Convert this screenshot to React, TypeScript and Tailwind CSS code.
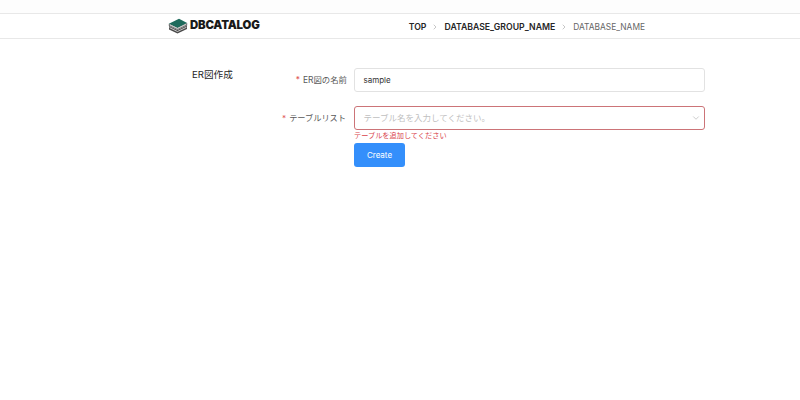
import { ChevronDown, ChevronRight } from "lucide-react";

const font = { fontFamily: '"Inter", "Noto Sans CJK JP", sans-serif' };

function Logo() {
  return (
    <div className="flex items-center gap-[2px]">
      <svg width="20" height="16" viewBox="0 0 20 16">
        <path d="M1 8 L1 11.5 L9.5 15.5 L19 11 L19 7.5 L9.5 12 Z" fill="#4a4a4a" />
        <path d="M1.5 9.6 L9.5 13.5 L18.5 9.2" stroke="#e4e4e4" strokeWidth="0.8" fill="none" />
        <path d="M0.8 5.8 L11 0.8 L19.2 5 L9.5 10 Z" fill="#1f6b5c" />
        <path d="M0.8 5.8 L9.5 10 L19.2 5 L19.2 7.4 L9.5 12 L0.8 8 Z" fill="#6f6f6f" />
        <path d="M2 7 L9.5 10.6 L18.2 6.3" stroke="#efefef" strokeWidth="0.8" fill="none" />
      </svg>
      <span className="text-[11.4px] font-black leading-none tracking-[-0.2px] text-[#1a1a1a]">DBCATALOG</span>
    </div>
  );
}

export default function App() {
  return (
    <div className="h-[400px] w-[800px] overflow-hidden bg-white" style={font}>
      <div className="h-[13px] bg-[#fdfdfd]" />
      <header className="flex h-[26px] items-center border-y border-[#e8e8e8] pl-[168px] pr-[155px]">
        <Logo />
        <nav className="ml-auto mt-[1px] flex items-center text-[8.7px] leading-[12px] text-[#262626]">
          <span className="font-semibold">TOP</span>
          <ChevronRight className="mx-[5px] size-[8px] text-[#aaa]" />
          <span className="font-semibold">DATABASE_GROUP_NAME</span>
          <ChevronRight className="mx-[5px] size-[8px] text-[#aaa]" />
          <span className="text-[8.4px] text-[#666]">DATABASE_NAME</span>
        </nav>
      </header>
      <main className="flex pl-[192px] pt-[29px]">
        <h1 className="-mt-[1px] w-[70px] text-[9.6px] leading-[16px] text-[#1f1f1f]">ER図作成</h1>
        <form className="flex flex-col">
          <div className="flex items-center">
            <label className="w-[85px] text-right text-[8.4px] text-[#595959]">
              <span className="mr-[3px] text-[#e05656]">*</span>ER図の名前
            </label>
            <div className="ml-[7px] flex h-[24px] w-[351px] items-center rounded-[3px] border border-[#e2e2e2] px-[8.5px] text-[8px] text-[#333]">
              sample
            </div>
          </div>
          <div className="mt-[14px] flex items-center">
            <label className="w-[84px] text-right text-[8.2px] text-[#595959]">
              <span className="mr-[3px] text-[#e05656]">*</span>テーブルリスト
            </label>
            <div className="ml-[8px] flex h-[24px] w-[351px] items-center justify-between rounded-[3px] border border-[#cc7478] px-[8.5px] text-[8.5px] text-[#bfbfbf]">
              テーブル名を入力してください。
              <ChevronDown className="-mr-[5px] size-[10px] text-[#c4c4c4]" />
            </div>
          </div>
          <p className="ml-[92px] text-[7.2px] leading-[11px] text-[#d9434a]">テーブルを追加してください</p>
          <button type="button" className="ml-[92px] mt-[2px] h-[24px] w-[51px] rounded-[3px] bg-[#348ffb] text-[8px] text-white">
            Create
          </button>
        </form>
      </main>
    </div>
  );
}
